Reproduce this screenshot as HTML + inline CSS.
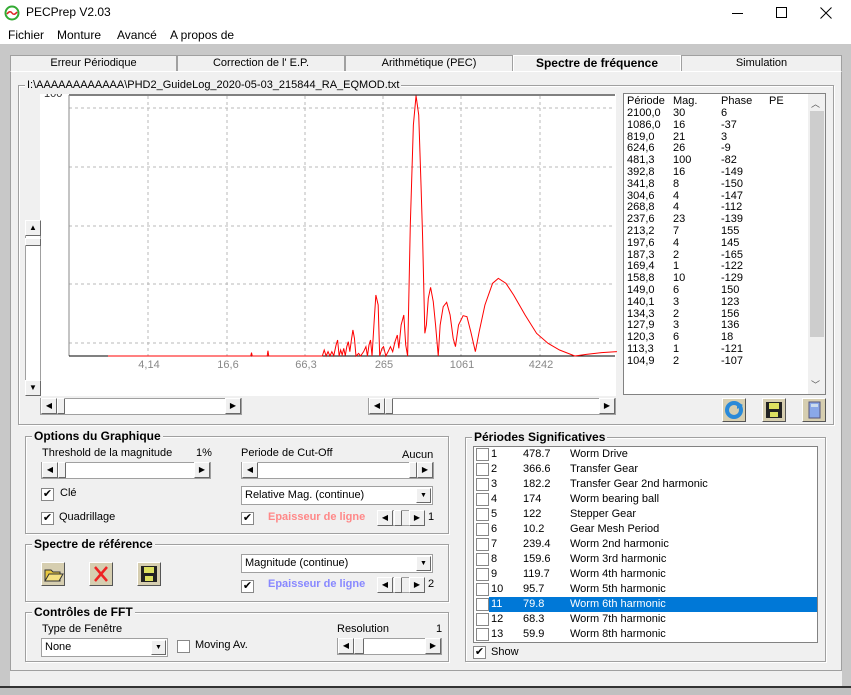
<!DOCTYPE html>
<html><head><meta charset="utf-8"><style>
*{box-sizing:border-box;margin:0;padding:0}
body{width:851px;height:695px;position:relative;overflow:hidden;background:#f0f0f0;font-family:"Liberation Sans",sans-serif;font-size:11px;color:#000}
.a{position:absolute}
.t{position:absolute;white-space:nowrap}
.grp{position:absolute;border:1px solid #a0a0a0;box-shadow:inset 1px 1px 0 #fff,1px 1px 0 #fff}
.gl{position:absolute;top:-8px;left:6px;background:#f0f0f0;padding:0 2px;font-weight:bold;font-size:12px}
.sb{position:absolute;background:#fff;border:1px solid #a0a0a0}
.btn{position:absolute;width:16px;height:16px;background:#f0f0f0;border:1px solid;border-color:#fff #696969 #696969 #fff;font-size:8px;text-align:center;line-height:14px}
.thumb{position:absolute;background:#f0f0f0;border:1px solid;border-color:#fff #696969 #696969 #fff}
.cb{position:absolute;width:13px;height:13px;background:#fff;border:1px solid #888;font-size:11px;line-height:11px;text-align:center}
.combo{position:absolute;height:19px;background:#fff;border:1px solid #a0a0a0;padding:2px 3px;font-size:11px}
.combo .dd{position:absolute;right:1px;top:1px;width:15px;height:15px;background:#f0f0f0;border:1px solid;border-color:#fff #696969 #696969 #fff;font-size:7px;text-align:center;line-height:13px}
.ib{position:absolute;width:24px;height:24px;background:#d6ceb0;border:1px solid;border-color:#fff #555 #555 #fff}
.tab{position:absolute;top:55px;height:17px;background:#f0f0f0;border:1px solid #a0a0a0;border-bottom:none;text-align:center;line-height:15px;font-size:11px}
.r{display:flex}.r span:first-child{width:46px}.r span:nth-child(2){width:48px}
</style></head><body>
<!-- title -->
<div class="a" style="left:0;top:0;width:851px;height:44px;background:#fff"></div>
<svg class="a" style="left:4px;top:5px" width="16" height="16"><circle cx="8" cy="8" r="6.5" fill="#fff" stroke="#3a3" stroke-width="2"/><path d="M3 9 Q6 5 8 8 T13 7" stroke="#d22" fill="none" stroke-width="1.5"/></svg>
<div class="t" style="left:26px;top:5px;font-size:12px">PECPrep V2.03</div>
<div class="a" style="left:732px;top:13px;width:11px;height:1px;background:#000"></div>
<div class="a" style="left:776px;top:7px;width:11px;height:11px;border:1px solid #000"></div>
<svg class="a" style="left:820px;top:7px" width="12" height="12"><path d="M0.5 0.5 L11.5 11.5 M11.5 0.5 L0.5 11.5" stroke="#000" stroke-width="1"/></svg>
<div class="t" style="left:8px;top:28px;font-size:12px">Fichier</div>
<div class="t" style="left:57px;top:28px;font-size:12px">Monture</div>
<div class="t" style="left:117px;top:28px;font-size:12px">Avancé</div>
<div class="t" style="left:170px;top:28px;font-size:12px">A propos de</div>
<div class="a" style="left:0;top:44px;width:851px;height:12px;background:#c8c8c8"></div>
<div class="a" style="left:0;top:56px;width:10px;height:630px;background:#c8c8c8"></div>
<div class="a" style="left:842px;top:56px;width:9px;height:630px;background:#c8c8c8"></div>
<!-- tabs -->
<div class="tab" style="left:10px;width:167px">Erreur Périodique</div>
<div class="tab" style="left:177px;width:168px">Correction de l' E.P.</div>
<div class="tab" style="left:345px;width:168px">Arithmétique (PEC)</div>
<div class="tab" style="left:513px;width:168px;font-weight:bold;font-size:12px;border-color:#fff">Spectre de fréquence</div>
<div class="tab" style="left:681px;width:161px">Simulation</div>
<div class="a" style="left:10px;top:71px;width:832px;height:600px;border:1px solid #a0a0a0;border-top-color:#fff;background:#f0f0f0"></div>
<div class="a" style="left:0;top:686px;width:851px;height:2px;background:#333"></div>
<div class="a" style="left:0;top:688px;width:851px;height:7px;background:#c0c0c0"></div>
<!-- file group -->
<div class="grp" style="left:18px;top:85px;width:816px;height:340px"></div>
<div class="t" style="left:25px;top:79px;background:#f0f0f0;padding:0 2px">I:\AAAAAAAAAAAA\PHD2_GuideLog_2020-05-03_215844_RA_EQMOD.txt</div>
<!-- plot -->
<div class="a" style="left:40px;top:94px;width:576px;height:302px;background:#fff"></div>
<div class="a" style="left:40px;top:94px;width:29px;height:6px;overflow:hidden"><div class="t" style="left:4px;top:-6px;font-size:11px;color:#333">100</div></div>
<svg class="a" style="left:0;top:0" width="851" height="420">
<g stroke="#b8b8b8" stroke-dasharray="3,3" stroke-width="1">
<line x1="148" y1="96" x2="148" y2="356"/><line x1="227" y1="96" x2="227" y2="356"/><line x1="305" y1="96" x2="305" y2="356"/><line x1="383" y1="96" x2="383" y2="356"/><line x1="461" y1="96" x2="461" y2="356"/><line x1="540" y1="96" x2="540" y2="356"/>
<line x1="69" y1="108" x2="615" y2="108"/><line x1="69" y1="167" x2="615" y2="167"/><line x1="69" y1="226" x2="615" y2="226"/><line x1="69" y1="284" x2="615" y2="284"/><line x1="69" y1="343" x2="615" y2="343"/>
</g>
<line x1="69" y1="95" x2="615" y2="95" stroke="#000"/>
<line x1="69" y1="95" x2="69" y2="356" stroke="#888"/>
<line x1="69" y1="356" x2="615" y2="356" stroke="#000"/>
<g font-family="Liberation Sans" font-size="11" fill="#888" text-anchor="middle">
<text x="149" y="368">4,14</text><text x="228" y="368">16,6</text><text x="306" y="368">66,3</text><text x="384" y="368">265</text><text x="462" y="368">1061</text><text x="541" y="368">4242</text></g>
<svg x="20" y="85" width="600" height="330" viewBox="0 0 1568 990" preserveAspectRatio="none">
<path vector-effect="non-scaling-stroke" stroke="#f00" stroke-width="1" fill="none" d="M230 813 L603 813 605 803 607 813 646 813 648 797 650 813 790 813 795 795 800 813 805 800 810 813 815 800 820 812 826 780 830 765 834 813 838 795 842 810 846 790 850 812 854 785 858 770 862 800 866 765 870 735 874 760 878 813 885 805 890 813 898 800 904 785 908 813 912 780 916 765 920 813 926 700 930 630 936 660 940 813 946 790 950 785 956 813 962 800 968 785 974 800 980 770 986 750 990 790 996 720 1003 690 1008 780 1013 813 1020 420 1028 120 1035 32 1042 90 1048 300 1052 450 1058 745 1062 720 1067 640 1073 607 1080 650 1086 720 1093 813 1098 720 1106 665 1115 652 1124 690 1132 760 1138 785 1146 720 1158 692 1168 695 1178 740 1190 800 1200 740 1215 660 1235 595 1250 580 1270 595 1290 630 1320 690 1350 745 1380 775 1410 795 1450 813 1480 808 1520 803 1560 800"/>
</svg>
</svg>
<!-- plot scrollbars -->
<div class="sb" style="left:25px;top:220px;width:16px;height:176px;background:#fff"></div>
<div class="btn" style="left:25px;top:220px">▲</div>
<div class="thumb" style="left:25px;top:238px;width:16px;height:8px"></div>
<div class="btn" style="left:25px;top:380px">▼</div>
<div class="sb" style="left:40px;top:398px;width:202px;height:17px"></div>
<div class="btn" style="left:41px;top:398px">◀</div>
<div class="thumb" style="left:57px;top:398px;width:8px;height:16px"></div>
<div class="btn" style="left:225px;top:398px">▶</div>
<div class="sb" style="left:368px;top:398px;width:248px;height:17px"></div>
<div class="btn" style="left:369px;top:398px">◀</div>
<div class="thumb" style="left:385px;top:398px;width:8px;height:16px"></div>
<div class="btn" style="left:599px;top:398px">▶</div>
<!-- table -->
<div class="a" style="left:623px;top:93px;width:203px;height:302px;background:#fff;border:1px solid #828282"></div>
<div class="a" style="left:808px;top:94px;width:17px;height:300px;background:#f0f0f0"></div>
<div class="a" style="left:810px;top:111px;width:14px;height:226px;background:#cdcdcd"></div>
<div class="t" style="left:811px;top:97px;font-size:9px;color:#555">︿</div>
<div class="t" style="left:811px;top:378px;font-size:9px;color:#555">﹀</div>
<div class="a" style="left:627px;top:96px;line-height:11.8px;font-size:11px">
<div style="display:flex"><span style="width:46px">Période</span><span style="width:48px">Mag.</span><span style="width:48px">Phase</span><span>PE</span></div>
</div>
<div class="a" style="left:627px;top:108px;line-height:11.8px;font-size:11px">
<div class="r"><span>2100,0</span><span>30</span><span>6</span></div>
<div class="r"><span>1086,0</span><span>16</span><span>-37</span></div>
<div class="r"><span>819,0</span><span>21</span><span>3</span></div>
<div class="r"><span>624,6</span><span>26</span><span>-9</span></div>
<div class="r"><span>481,3</span><span>100</span><span>-82</span></div>
<div class="r"><span>392,8</span><span>16</span><span>-149</span></div>
<div class="r"><span>341,8</span><span>8</span><span>-150</span></div>
<div class="r"><span>304,6</span><span>4</span><span>-147</span></div>
<div class="r"><span>268,8</span><span>4</span><span>-112</span></div>
<div class="r"><span>237,6</span><span>23</span><span>-139</span></div>
<div class="r"><span>213,2</span><span>7</span><span>155</span></div>
<div class="r"><span>197,6</span><span>4</span><span>145</span></div>
<div class="r"><span>187,3</span><span>2</span><span>-165</span></div>
<div class="r"><span>169,4</span><span>1</span><span>-122</span></div>
<div class="r"><span>158,8</span><span>10</span><span>-129</span></div>
<div class="r"><span>149,0</span><span>6</span><span>150</span></div>
<div class="r"><span>140,1</span><span>3</span><span>123</span></div>
<div class="r"><span>134,3</span><span>2</span><span>156</span></div>
<div class="r"><span>127,9</span><span>3</span><span>136</span></div>
<div class="r"><span>120,3</span><span>6</span><span>18</span></div>
<div class="r"><span>113,3</span><span>1</span><span>-121</span></div>
<div class="r"><span>104,9</span><span>2</span><span>-107</span></div>
</div>
<div class="ib" style="left:722px;top:398px"><svg width="22" height="22"><circle cx="11" cy="11" r="7" fill="none" stroke="#2a8ad8" stroke-width="4"/><path d="M14 3 L20 6 L14 10Z" fill="#2a8ad8"/></svg></div>
<div class="ib" style="left:762px;top:398px"><svg width="22" height="22"><rect x="3" y="3" width="16" height="16" fill="#222"/><rect x="6" y="4" width="10" height="6" fill="#dde060"/><rect x="7" y="13" width="8" height="5" fill="#dde060"/></svg></div>
<div class="ib" style="left:802px;top:398px"><svg width="22" height="22"><rect x="6" y="3" width="11" height="16" fill="#8aa8e8" stroke="#557"/><rect x="8" y="5" width="7" height="3" fill="#cde"/></svg></div>
<!-- Options du graphique -->
<div class="grp" style="left:25px;top:436px;width:424px;height:98px"><div class="gl">Options du Graphique</div></div>
<div class="t" style="left:42px;top:447px">Threshold de la magnitude</div>
<div class="t" style="left:196px;top:447px">1%</div>
<div class="sb" style="left:41px;top:462px;width:170px;height:17px"></div>
<div class="btn" style="left:42px;top:462px">◀</div>
<div class="thumb" style="left:58px;top:462px;width:8px;height:16px"></div>
<div class="btn" style="left:194px;top:462px">▶</div>
<div class="cb" style="left:41px;top:488px">✔</div><div class="t" style="left:60px;top:487px">Clé</div>
<div class="cb" style="left:41px;top:512px">✔</div><div class="t" style="left:59px;top:511px">Quadrillage</div>
<div class="t" style="left:241px;top:447px">Periode de Cut-Off</div>
<div class="t" style="left:402px;top:449px">Aucun</div>
<div class="sb" style="left:241px;top:462px;width:193px;height:17px"></div>
<div class="btn" style="left:242px;top:462px">◀</div>
<div class="thumb" style="left:409px;top:462px;width:8px;height:16px"></div>
<div class="btn" style="left:417px;top:462px">▶</div>
<div class="combo" style="left:241px;top:486px;width:192px">Relative Mag. (continue)<div class="dd">▼</div></div>
<div class="cb" style="left:241px;top:512px">✔</div>
<div class="t" style="left:268px;top:511px;color:#f88;font-weight:bold">Epaisseur de ligne</div>
<div class="sb" style="left:377px;top:510px;width:48px;height:16px;background:#f0f0f0"></div>
<div class="btn" style="left:377px;top:510px">◀</div><div class="thumb" style="left:394px;top:510px;width:8px;height:16px"></div><div class="btn" style="left:409px;top:510px">▶</div>
<div class="t" style="left:428px;top:511px">1</div>
<!-- Spectre de reference -->
<div class="grp" style="left:25px;top:544px;width:424px;height:58px"><div class="gl">Spectre de référence</div></div>
<div class="ib" style="left:41px;top:562px"><svg width="22" height="22"><path d="M3 7 h6 l2 2 h7 v9 h-15z" fill="#e8c840" stroke="#333"/><path d="M3 18 l4 -7 h14 l-4 7z" fill="#f4e080" stroke="#333"/></svg></div>
<div class="ib" style="left:89px;top:562px"><svg width="22" height="22"><path d="M5 4 L17 18 M17 4 L5 18" stroke="#e22" stroke-width="2.5"/></svg></div>
<div class="ib" style="left:137px;top:562px"><svg width="22" height="22"><rect x="3" y="3" width="16" height="16" fill="#222"/><rect x="6" y="4" width="10" height="6" fill="#dde060"/><rect x="7" y="13" width="8" height="5" fill="#dde060"/></svg></div>
<div class="combo" style="left:241px;top:554px;width:192px">Magnitude (continue)<div class="dd">▼</div></div>
<div class="cb" style="left:241px;top:580px">✔</div>
<div class="t" style="left:268px;top:578px;color:#88f;font-weight:bold">Epaisseur de ligne</div>
<div class="sb" style="left:377px;top:577px;width:48px;height:16px;background:#f0f0f0"></div>
<div class="btn" style="left:377px;top:577px">◀</div><div class="thumb" style="left:394px;top:577px;width:8px;height:16px"></div><div class="btn" style="left:409px;top:577px">▶</div>
<div class="t" style="left:428px;top:578px">2</div>
<!-- FFT -->
<div class="grp" style="left:25px;top:612px;width:424px;height:50px"><div class="gl">Contrôles de FFT</div></div>
<div class="t" style="left:42px;top:623px">Type de Fenêtre</div>
<div class="combo" style="left:41px;top:638px;width:127px">None<div class="dd">▼</div></div>
<div class="cb" style="left:177px;top:640px"></div><div class="t" style="left:195px;top:639px">Moving Av.</div>
<div class="t" style="left:337px;top:623px">Resolution</div>
<div class="t" style="left:436px;top:623px">1</div>
<div class="sb" style="left:337px;top:638px;width:105px;height:17px"></div>
<div class="btn" style="left:338px;top:638px">◀</div>
<div class="thumb" style="left:354px;top:638px;width:10px;height:16px"></div>
<div class="btn" style="left:425px;top:638px">▶</div>
<!-- Periodes -->
<div class="grp" style="left:465px;top:437px;width:361px;height:225px"><div class="gl">Périodes Significatives</div></div>
<div class="a" style="left:473px;top:446px;width:345px;height:197px;background:#fff;border:1px solid #828282"></div>
<div class="a" style="left:489px;top:597px;width:328px;height:15px;background:#0078d7"></div>
<div class="a" style="left:476px;top:447px;font-size:11px;line-height:15px">
<div style="display:flex;height:15px"><span class="cb" style="position:relative;top:1px;margin-right:2px"></span><span style="width:32px">1</span><span style="width:47px">478.7</span><span>Worm Drive</span></div>
<div style="display:flex;height:15px"><span class="cb" style="position:relative;top:1px;margin-right:2px"></span><span style="width:32px">2</span><span style="width:47px">366.6</span><span>Transfer Gear</span></div>
<div style="display:flex;height:15px"><span class="cb" style="position:relative;top:1px;margin-right:2px"></span><span style="width:32px">3</span><span style="width:47px">182.2</span><span>Transfer Gear 2nd harmonic</span></div>
<div style="display:flex;height:15px"><span class="cb" style="position:relative;top:1px;margin-right:2px"></span><span style="width:32px">4</span><span style="width:47px">174</span><span>Worm bearing ball</span></div>
<div style="display:flex;height:15px"><span class="cb" style="position:relative;top:1px;margin-right:2px"></span><span style="width:32px">5</span><span style="width:47px">122</span><span>Stepper Gear</span></div>
<div style="display:flex;height:15px"><span class="cb" style="position:relative;top:1px;margin-right:2px"></span><span style="width:32px">6</span><span style="width:47px">10.2</span><span>Gear Mesh Period</span></div>
<div style="display:flex;height:15px"><span class="cb" style="position:relative;top:1px;margin-right:2px"></span><span style="width:32px">7</span><span style="width:47px">239.4</span><span>Worm 2nd harmonic</span></div>
<div style="display:flex;height:15px"><span class="cb" style="position:relative;top:1px;margin-right:2px"></span><span style="width:32px">8</span><span style="width:47px">159.6</span><span>Worm 3rd harmonic</span></div>
<div style="display:flex;height:15px"><span class="cb" style="position:relative;top:1px;margin-right:2px"></span><span style="width:32px">9</span><span style="width:47px">119.7</span><span>Worm 4th harmonic</span></div>
<div style="display:flex;height:15px"><span class="cb" style="position:relative;top:1px;margin-right:2px"></span><span style="width:32px">10</span><span style="width:47px">95.7</span><span>Worm 5th harmonic</span></div>
<div style="display:flex;height:15px;color:#fff"><span class="cb" style="position:relative;top:1px;margin-right:2px"></span><span style="width:32px">11</span><span style="width:47px">79.8</span><span>Worm 6th harmonic</span></div>
<div style="display:flex;height:15px"><span class="cb" style="position:relative;top:1px;margin-right:2px"></span><span style="width:32px">12</span><span style="width:47px">68.3</span><span>Worm 7th harmonic</span></div>
<div style="display:flex;height:15px"><span class="cb" style="position:relative;top:1px;margin-right:2px"></span><span style="width:32px">13</span><span style="width:47px">59.9</span><span>Worm 8th harmonic</span></div>
</div>
<div class="cb" style="left:473px;top:646px">✔</div><div class="t" style="left:491px;top:646px">Show</div>
</body></html>
